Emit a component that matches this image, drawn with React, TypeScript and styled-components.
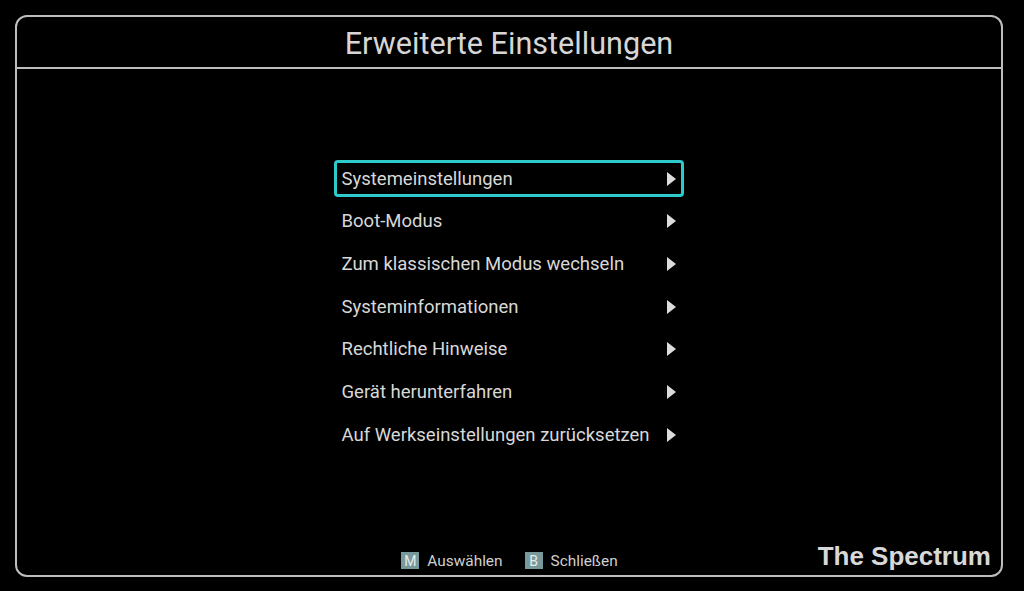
import React from 'react';
import styled, { createGlobalStyle } from 'styled-components';

const GlobalStyle = createGlobalStyle`
  html, body {
    margin: 0;
    padding: 0;
    background: #000;
  }
  body {
    font-family: Roboto, "Noto Sans", sans-serif;
    color: #d4d4d4;
  }
  * {
    box-sizing: border-box;
  }
`;

const Screen = styled.div`
  width: 1024px;
  height: 591px;
  padding: 15px 21px 14px 15px;
  background: #000;
`;

const Frame = styled.div`
  height: 100%;
  border: 2px solid #bdbdbd;
  border-radius: 12px;
  display: flex;
  flex-direction: column;
`;

const Header = styled.header`
  height: 52px;
  border-bottom: 2px solid #bdbdbd;
  display: flex;
  align-items: center;
  justify-content: center;
`;

const Title = styled.h1`
  margin: 0;
  font-family: Roboto, sans-serif;
  font-weight: 400;
  font-size: 30.6px;
  color: #d6d6d6;
  padding-top: 2px;
`;

const Main = styled.main`
  flex: 1;
  display: flex;
  justify-content: center;
  padding-top: 91px;
`;

const Menu = styled.ul`
  list-style: none;
  margin: 0;
  padding: 0;
  width: 350px;
  margin-left: -1px;
  display: flex;
  flex-direction: column;
  gap: 5.7px;
`;

const Item = styled.li<{ $active?: boolean }>`
  height: 37px;
  display: flex;
  align-items: center;
  justify-content: space-between;
  padding: 0 5px 0 5px;
  border: 3px solid ${({ $active }) => ($active ? '#2ec9cb' : 'transparent')};
  border-radius: 4px;
  font-size: 18.5px;
  color: #d8d8d8;
`;

const Arrow = styled.span`
  width: 0;
  height: 0;
  border-top: 7px solid transparent;
  border-bottom: 7px solid transparent;
  border-left: 9px solid #dcdcdc;
`;

const Footer = styled.footer`
  height: 44px;
  display: grid;
  grid-template-columns: 1fr auto 1fr;
  align-items: center;
`;

const Hints = styled.div`
  grid-column: 2;
  display: flex;
  align-items: center;
  gap: 22px;
  padding-top: 15px;
  margin-left: 1px;
`;

const Hint = styled.div`
  display: flex;
  align-items: center;
  gap: 8px;
  font-size: 15.4px;
  color: #d0d0d0;
`;

const Key = styled.span`
  width: 18px;
  height: 17px;
  background: #78999b;
  color: #e4ecec;
  font-size: 14px;
  display: flex;
  align-items: center;
  justify-content: center;
`;

const Brand = styled.div`
  grid-column: 3;
  justify-self: end;
  padding: 6px 10px 0 0;
  font-family: "Liberation Sans", Arial, sans-serif;
  font-weight: 700;
  font-size: 26px;
  color: #d8d8d8;
`;

const items = [
  'Systemeinstellungen',
  'Boot-Modus',
  'Zum klassischen Modus wechseln',
  'Systeminformationen',
  'Rechtliche Hinweise',
  'Gerät herunterfahren',
  'Auf Werkseinstellungen zurücksetzen',
];

const App: React.FC = () => {
  return (
    <>
      <GlobalStyle />
      <Screen>
        <Frame>
          <Header>
            <Title>Erweiterte Einstellungen</Title>
          </Header>
          <Main>
            <Menu>
              {items.map((label, index) => (
                <Item key={label} $active={index === 0}>
                  <span>{label}</span>
                  <Arrow />
                </Item>
              ))}
            </Menu>
          </Main>
          <Footer>
            <Hints>
              <Hint>
                <Key>M</Key>
                Auswählen
              </Hint>
              <Hint>
                <Key>B</Key>
                Schließen
              </Hint>
            </Hints>
            <Brand>The Spectrum</Brand>
          </Footer>
        </Frame>
      </Screen>
    </>
  );
};

export default App;
